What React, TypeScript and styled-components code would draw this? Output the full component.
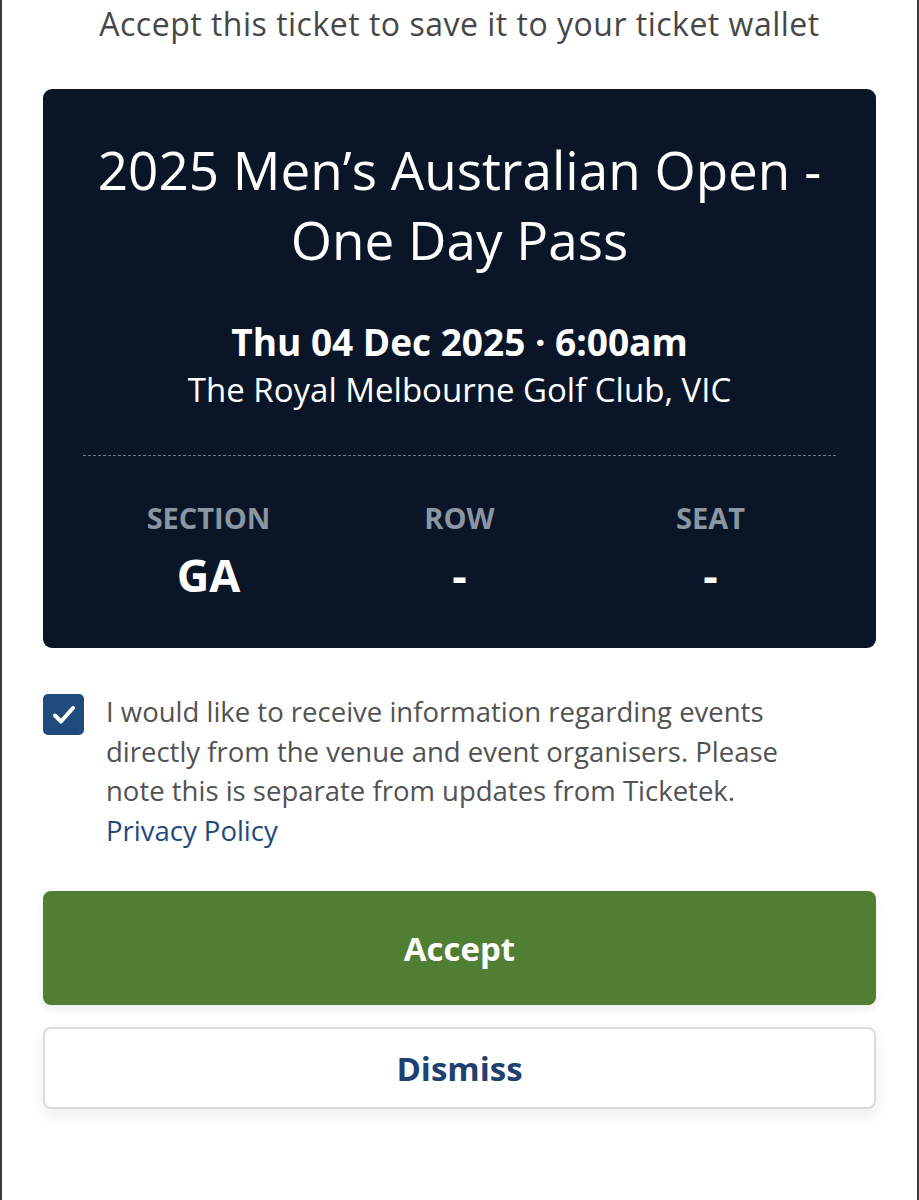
import React, { useState } from 'react';
import styled, { createGlobalStyle } from 'styled-components';

const GlobalStyle = createGlobalStyle`
  html, body {
    margin: 0;
    padding: 0;
    background: #ffffff;
  }
  body {
    font-family: 'Open Sans', 'Noto Sans', sans-serif;
  }
`;

const Frame = styled.div`
  box-sizing: border-box;
  width: 919px;
  height: 1200px;
  border-left: 2px solid #3a3a3a;
  border-right: 2px solid #3a3a3a;
  padding: 0 41px;
  overflow: hidden;
`;

const Intro = styled.p`
  margin: 0;
  height: 89px;
  box-sizing: border-box;
  text-align: center;
  font-size: 32px;
  letter-spacing: 0.5px;
  line-height: 48px;
  color: #474747;
  white-space: nowrap;
`;

const Ticket = styled.section`
  background: #0a1628;
  border-radius: 9px;
  padding: 46px 30px 0;
  height: 559px;
  box-sizing: border-box;
  color: #ffffff;
  text-align: center;
`;

const Title = styled.h1`
  margin: 0;
  font-size: 53px;
  font-weight: 500;
  line-height: 70px;
  white-space: nowrap;
`;

const When = styled.div`
  margin-top: 44px;
  font-size: 37px;
  font-weight: 700;
  line-height: 46px;
`;

const Venue = styled.div`
  margin-top: 1px;
  font-size: 33px;
  line-height: 48px;
`;

const Divider = styled.hr`
  margin: 41px 10px 0;
  border: 0;
  border-top: 1px dashed #6d7886;
`;

const Seats = styled.div`
  display: grid;
  grid-template-columns: repeat(3, 1fr);
  padding: 44px 10px 0;
`;

const SeatCol = styled.div`
  display: flex;
  flex-direction: column;
  align-items: center;
`;

const SeatLabel = styled.span`
  font-size: 29px;
  font-weight: 700;
  line-height: 36px;
  color: #8b96a3;
`;

const SeatValue = styled.span`
  margin-top: 11px;
  font-size: 45px;
  font-weight: 700;
  line-height: 56px;
`;

const Consent = styled.label`
  display: flex;
  gap: 22px;
  margin-top: 46px;
  cursor: pointer;
`;

const Box = styled.span<{ checked: boolean }>`
  flex: none;
  width: 41px;
  height: 41px;
  border-radius: 5px;
  background: ${({ checked }) => (checked ? '#1f4a7c' : '#ffffff')};
  border: ${({ checked }) => (checked ? 'none' : '2px solid #1f4a7c')};
  box-sizing: border-box;
  display: flex;
  align-items: center;
  justify-content: center;
`;

const ConsentText = styled.span`
  margin-top: -2px;
  padding-right: 40px;
  font-size: 27.5px;
  line-height: 39.5px;
  color: #525252;
`;

const Link = styled.a`
  color: #1f4a7c;
  text-decoration: none;
`;

const Button = styled.button<{ variant: 'primary' | 'secondary' }>`
  display: block;
  width: 100%;
  box-sizing: border-box;
  font-family: 'Open Sans', 'Noto Sans', sans-serif;
  font-size: 33px;
  font-weight: 700;
  border-radius: 8px;
  cursor: pointer;
  ${({ variant }) =>
    variant === 'primary'
      ? `
    height: 114px;
    margin-top: 41px;
    background: #507f34;
    color: #ffffff;
    border: none;
    box-shadow: 0 4px 10px rgba(0, 0, 0, 0.08);
  `
      : `
    height: 82px;
    margin-top: 22px;
    background: #ffffff;
    color: #1f4170;
    border: 2px solid #dcdcdc;
    box-shadow: 0 6px 16px rgba(0, 0, 0, 0.08);
  `}
`;

const seats = [
  { label: 'SECTION', value: 'GA' },
  { label: 'ROW', value: '-' },
  { label: 'SEAT', value: '-' },
];

export default function App() {
  const [optIn, setOptIn] = useState(true);

  return (
    <>
      <GlobalStyle />
      <Frame>
        <Intro>Accept this ticket to save it to your ticket wallet</Intro>
        <Ticket>
          <Title>
            2025 Men’s Australian Open -<br />
            One Day Pass
          </Title>
          <When>Thu 04 Dec 2025 · 6:00am</When>
          <Venue>The Royal Melbourne Golf Club, VIC</Venue>
          <Divider />
          <Seats>
            {seats.map((s) => (
              <SeatCol key={s.label}>
                <SeatLabel>{s.label}</SeatLabel>
                <SeatValue>{s.value}</SeatValue>
              </SeatCol>
            ))}
          </Seats>
        </Ticket>
        <Consent onClick={() => setOptIn(!optIn)}>
          <Box checked={optIn}>
            {optIn && (
              <svg width="24" height="20" viewBox="0 0 24 20">
                <path
                  d="M3 10.5 L9 16.5 L21 3"
                  fill="none"
                  stroke="#ffffff"
                  strokeWidth="4"
                  strokeLinecap="round"
                  strokeLinejoin="round"
                />
              </svg>
            )}
          </Box>
          <ConsentText>
            I would like to receive information regarding events directly from
            the venue and event organisers. Please note this is separate from
            updates from Ticketek.
            <br />
            <Link href="#">Privacy Policy</Link>
          </ConsentText>
        </Consent>
        <Button variant="primary">Accept</Button>
        <Button variant="secondary">Dismiss</Button>
      </Frame>
    </>
  );
}
